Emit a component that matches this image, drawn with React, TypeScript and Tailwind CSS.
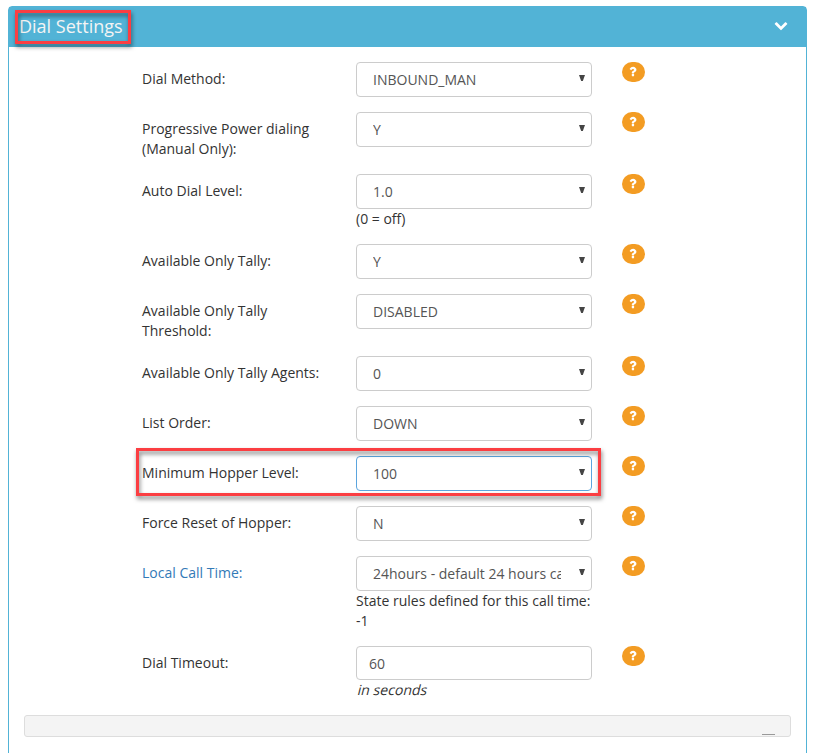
import { ReactNode } from 'react'

type Campo = {
  label: string
  value: string
  tipo?: 'select' | 'input'
  nota?: ReactNode
  link?: boolean
  activo?: boolean
}

const campos: Campo[] = [
  { label: 'Dial Method:', value: 'INBOUND_MAN' },
  { label: 'Progressive Power dialing (Manual Only):', value: 'Y' },
  { label: 'Auto Dial Level:', value: '1.0', nota: '(0 = off)' },
  { label: 'Available Only Tally:', value: 'Y' },
  { label: 'Available Only Tally Threshold:', value: 'DISABLED' },
  { label: 'Available Only Tally Agents:', value: '0' },
  { label: 'List Order:', value: 'DOWN' },
  { label: 'Minimum Hopper Level:', value: '100', activo: true },
  { label: 'Force Reset of Hopper:', value: 'N' },
  {
    label: 'Local Call Time:',
    value: '24hours - default 24 hours ca',
    nota: 'State rules defined for this call time: -1',
    link: true,
  },
  {
    label: 'Dial Timeout:',
    value: '60',
    tipo: 'input',
    nota: <span className="ml-[1.5px] inline-block -skew-x-[14deg] tracking-[0.03px]">in seconds</span>,
  },
]

function ChevronDown() {
  return (
    <svg viewBox="0 0 1792 1792" className="-mt-[3px] h-3.5 w-3.5 fill-white">
      <path d="M1683 808l-742 741q-19 19-45 19t-45-19l-742-741q-19-19-19-45.5t19-45.5l166-165q19-19 45-19t45 19l531 531 531-531q19-19 45-19t45 19l166 165q19 19 19 45.5t-19 45.5z" />
    </svg>
  )
}

function HelpBadge() {
  return (
    <button className="ml-[30px] flex h-5 w-[23px] rounded-[10px] bg-[#f39c23] pt-[3px] pl-[7px]" aria-label="Help">
      <svg viewBox="0 0 1088 1792" className="h-[13px] w-[7.9px] fill-white">
        <path d="M704 1256v240q0 16-12 28t-28 12h-240q-16 0-28-12t-12-28v-240q0-16 12-28t28-12h240q16 0 28 12t12 28zm316-600q0 54-15.5 101t-35 76.5-55 59.5-57.5 43.5-61 35.5q-41 23-68.5 65t-27.5 67q0 17-12 32.5t-28 15.5h-240q-15 0-25.5-18.5t-10.5-37.5v-45q0-83 65-156.5t143-108.5q59-27 84-56t25-76q0-42-46.5-74t-107.5-32q-65 0-108 29-35 25-107 115-13 16-31 16-12 0-25-8l-164-125q-13-10-15.5-25t5.5-28q160-266 464-266 80 0 161 31t146 83 106 127.5 41 158.5z" />
      </svg>
    </button>
  )
}

function SelectBox({ value, activo }: { value: string; activo?: boolean }) {
  return (
    <div
      className={`flex h-[35px] items-center justify-between rounded border pt-px pr-1.5 pl-4 text-[#555] ${
        activo ? 'border-[#5ba5de]' : 'border-[#ccc]'
      }`}
    >
      <span className="w-[188px] overflow-hidden whitespace-nowrap">{value}</span>
      <svg viewBox="0 0 6 6" className="-mt-1 h-1.5 w-1.5 fill-[#444]">
        <path d="M0 0h6L3.8 6H2.2z" />
      </svg>
    </div>
  )
}

function Fila({ campo }: { campo: Campo }) {
  return (
    <div className="relative mb-[15px] flex items-start">
      <label className={`mr-[30px] w-[184px] pt-[7px] ${campo.link ? 'text-[#337ab7]' : ''}`}>{campo.label}</label>
      <div className="w-[236px]">
        {campo.tipo === 'input' ? (
          <div className="flex h-[34px] items-center rounded border border-[#ccc] px-3 pt-0.5 text-[#555]">{campo.value}</div>
        ) : (
          <SelectBox value={campo.value} activo={campo.activo} />
        )}
        {campo.nota && <div>{campo.nota}</div>}
      </div>
      <HelpBadge />
      {campo.activo && (
        <span className="pointer-events-none absolute -top-2 -left-1.5 h-12 w-[465px] border-3 border-[#fb3e42] drop-shadow-[1px_3px_2px_rgba(0,0,0,0.5)]" />
      )}
    </div>
  )
}

export default function App() {
  return (
    <main className="h-[753px] overflow-hidden bg-white pt-1.5 pr-1.5 pl-2 font-['Open_Sans','Noto_Sans',sans-serif] text-sm leading-5 text-[#333]">
      <section className="h-[800px] rounded-t border border-[#52b3d6]">
        <header className="flex h-10 items-center justify-between bg-[#52b3d6] pr-[18px] pb-0.5 pl-2.5">
          <h3 className="relative text-lg leading-5 text-[#f4f4f4]">
            Dial Settings
            <span className="pointer-events-none absolute -top-1.5 -left-1 h-[34px] w-[116px] border-3 border-[#fb3e42] drop-shadow-[1px_3px_2px_rgba(0,0,0,0.5)]" />
          </h3>
          <ChevronDown />
        </header>

        <div className="px-[15px] pt-[15px]">
          <form className="pl-[118px]">
            {campos.map((campo) => (
              <Fila key={campo.label} campo={campo} />
            ))}
          </form>
          <footer className="flex h-[22px] items-end justify-end rounded-[3px] border border-[#ddd] bg-[#f4f4f4] pr-[15px] pb-px">
            <span className="h-px w-[13px] bg-[#999]" />
          </footer>
        </div>
      </section>
    </main>
  )
}
